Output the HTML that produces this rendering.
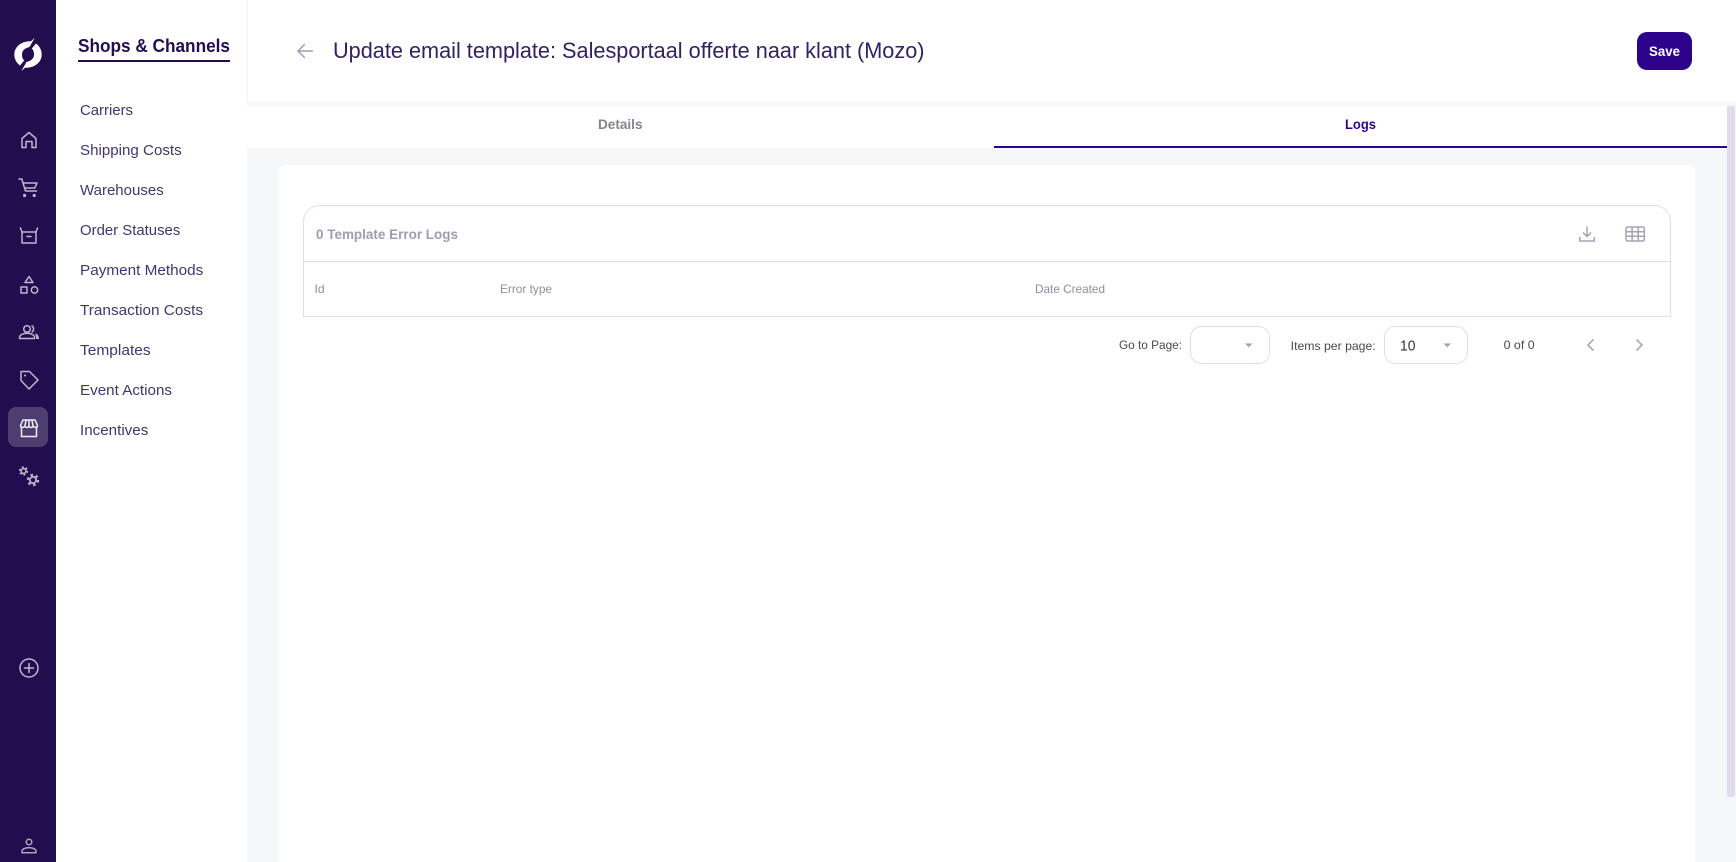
<!DOCTYPE html>
<html lang="en"><head><meta charset="utf-8"><title>Update email template</title>
<style>
html,body{margin:0;padding:0;width:1736px;height:862px;overflow:hidden;background:#f6f7f9}
svg{display:block;font-family:"Liberation Sans",sans-serif}
.m{font-size:15px;fill:#43366c}
.ic{fill:none;stroke:#bdb7ce;stroke-width:1.5;stroke-linejoin:round;stroke-linecap:round}
</style></head><body>
<svg width="1736" height="862" viewBox="0 0 1736 862" xmlns="http://www.w3.org/2000/svg">
<rect width="1736" height="862" fill="#f6f7f9"/>
<rect x="247" y="0" width="1489" height="102" fill="#fff"/>
<rect x="247" y="106" width="1481" height="42" fill="#fff"/>
<rect x="994" y="146" width="734" height="2" fill="#2e038c"/>
<rect x="1727" y="106" width="8" height="691" rx="2" fill="#e0dcee"/>
<rect x="279" y="165" width="1416" height="720" rx="6" fill="#fff"/>
<rect x="56" y="0" width="191" height="862" fill="#fff"/>
<rect x="247" y="0" width="1" height="102" fill="#f4f4f7"/>
<rect x="0" y="0" width="56" height="862" fill="#220d4e"/>

<g fill="#fff">
<path d="M34.8 37.7L31 41.2C21 41 14.3 47 14.3 54.5C14.3 59 16.5 63 20 65.5L24.2 60.5C22.7 59.3 22 57 22 54.5C22 50.5 25 48 29.5 47Z"/>
<path transform="rotate(180 28 54.5)" d="M34.8 37.7L31 41.2C21 41 14.3 47 14.3 54.5C14.3 59 16.5 63 20 65.5L24.2 60.5C22.7 59.3 22 57 22 54.5C22 50.5 25 48 29.5 47Z"/>
</g>

<g class="ic">
<path d="M22 147.5V138.5L29 132.5L36 138.5V147.5H32V141.5H26V147.5Z"/>
<path d="M19 179h2.8L25.5 191H36.5M23 183H37L34.8 188H24.6"/>
<path d="M20.5 228L22 232V243H36V232L37.5 228M22 232H36M27 236.5H31"/>
<path d="M29 276.5L33 282.5H25Z"/>
<rect x="21" y="287" width="6" height="6"/>
<circle cx="34.5" cy="290" r="3.2"/>
<circle cx="27" cy="329" r="3.3"/>
<path d="M19.5 338.5V337.5C19.5 334.8 23.5 333.3 27 333.3S34.5 334.8 34.5 337.5V338.5Z"/>
<path d="M32 325.8A4 4 0 0 1 32 332.2"/>
<path d="M21 371.5H29.5L38 380L29 389L21 380.5Z"/>
<path d="M21.5 427V436.5H36.5V427" style="stroke:#eeecf3"/>
<path d="M23 420H35L37.5 425.5C37.5 428 34.5 428 33.2 426C32 428 30 428 29 426C28 428 26 428 24.8 426C23.5 428 20.5 428 20.5 425.5ZM26 420.5L25 425.5M29 420.5V425.5M32 420.5L33 425.5" style="stroke:#eeecf3"/>
<circle cx="23.5" cy="471" r="2.4"/>
<circle cx="23.5" cy="471" r="3.8" style="stroke-width:1.6;stroke-dasharray:2 2;stroke-linecap:butt"/>
<circle cx="33" cy="480" r="3.2" style="stroke-width:1.8"/>
<circle cx="33" cy="480" r="5.2" style="stroke-width:2;stroke-dasharray:2.6 2.85;stroke-linecap:butt"/>
<circle cx="29" cy="668" r="9"/>
<path d="M24.5 668H33.5M29 663.5V672.5"/>
<g style="stroke:#aaa4bf">
<circle cx="29" cy="842" r="2.8"/>
<path d="M22 852.8V851.3C22 849 25.5 847.6 29 847.6S36 849 36 851.3V852.8Z"/>
</g>
</g>
<path d="M35 333.4C37.4 334 39 335.5 39 339H36C36 336.8 35.8 335 35 333.4Z" fill="#bdb7ce"/>
<circle cx="25" cy="375.5" r="1" fill="#bdb7ce"/>
<circle cx="24.6" cy="195.5" r="1.6" fill="#bdb7ce"/>
<circle cx="34.2" cy="195.5" r="1.6" fill="#bdb7ce"/>
<rect x="8" y="407" width="40" height="40" rx="8" fill="#ffffff" fill-opacity=".2"/>

<text x="78" y="52" font-size="18" font-weight="700" fill="#220d4e" textLength="152" lengthAdjust="spacingAndGlyphs">Shops &amp; Channels</text>
<rect x="78" y="60" width="152" height="2" fill="#220d4e"/>
<text class="m" x="80" y="115" textLength="53" lengthAdjust="spacingAndGlyphs">Carriers</text>
<text class="m" x="80" y="155" textLength="101.7" lengthAdjust="spacingAndGlyphs">Shipping Costs</text>
<text class="m" x="80" y="195" textLength="83.7" lengthAdjust="spacingAndGlyphs">Warehouses</text>
<text class="m" x="80" y="235" textLength="100.3" lengthAdjust="spacingAndGlyphs">Order Statuses</text>
<text class="m" x="80" y="275" textLength="123.3" lengthAdjust="spacingAndGlyphs">Payment Methods</text>
<text class="m" x="80" y="315" textLength="123" lengthAdjust="spacingAndGlyphs">Transaction Costs</text>
<text class="m" x="80" y="355" textLength="70.7" lengthAdjust="spacingAndGlyphs">Templates</text>
<text class="m" x="80" y="395" textLength="92" lengthAdjust="spacingAndGlyphs">Event Actions</text>
<text class="m" x="80" y="435" textLength="68.3" lengthAdjust="spacingAndGlyphs">Incentives</text>

<path d="M312.5 51H298M304.5 44.5L298 51L304.5 57.5" fill="none" stroke="#a09ab4" stroke-width="1.4" stroke-linejoin="round" stroke-linecap="round"/>
<text x="333" y="58" font-size="22" fill="#33225f" textLength="591.5" lengthAdjust="spacingAndGlyphs">Update email template: Salesportaal offerte naar klant (Mozo)</text>

<rect x="1637" y="32" width="55" height="38" rx="10" fill="#2e038c"/>
<text x="1649" y="56" font-size="14" font-weight="700" fill="#fff" textLength="31" lengthAdjust="spacingAndGlyphs">Save</text>

<text x="598" y="129" font-size="14" font-weight="700" fill="#85848c" textLength="44.5" lengthAdjust="spacingAndGlyphs">Details</text>
<text x="1345" y="129" font-size="14" font-weight="700" fill="#2e038c" textLength="31" lengthAdjust="spacingAndGlyphs">Logs</text>

<path d="M319.5 205.5H1654.5A16 16 0 0 1 1670.5 221.5V316.5H303.5V221.5A16 16 0 0 1 319.5 205.5Z" fill="#fff" stroke="#e0deec" stroke-width="1"/>
<rect x="304" y="261" width="1366" height="1" fill="#e0deec"/>
<text x="316" y="239" font-size="14" font-weight="700" fill="#a09cb0" textLength="142" lengthAdjust="spacingAndGlyphs">0 Template Error Logs</text>
<g font-size="12" fill="#908ca2">
<text x="314.5" y="293" textLength="10" lengthAdjust="spacingAndGlyphs">Id</text>
<text x="500" y="293" textLength="52" lengthAdjust="spacingAndGlyphs">Error type</text>
<text x="1035" y="293" textLength="70" lengthAdjust="spacingAndGlyphs">Date Created</text>
</g>

<g fill="none" stroke="#a6a2b6" stroke-width="1.5">
<path d="M1587 226.5V236M1583 232.5L1587 236.5L1591 232.5M1579.8 237V241H1594.2V237"/>
<rect x="1626" y="227" width="18.3" height="14" rx="1.5"/>
<path d="M1632.1 227V241M1638.2 227V241M1626 231.7H1644.3M1626 236.3H1644.3"/>
</g>

<g font-size="12" fill="#4a4a4a">
<text x="1119" y="349" textLength="63" lengthAdjust="spacingAndGlyphs">Go to Page:</text>
<text x="1290.7" y="350" textLength="85" lengthAdjust="spacingAndGlyphs">Items per page:</text>
<text x="1503.6" y="349" textLength="31" lengthAdjust="spacingAndGlyphs">0 of 0</text>
</g>
<rect x="1190.5" y="326.5" width="79" height="37" rx="11" fill="#fff" stroke="#e0deec"/>
<rect x="1384.5" y="326.5" width="83" height="37" rx="11" fill="#fff" stroke="#e0deec"/>
<path d="M1245 343.5H1252.5L1248.75 347.3Z" fill="#a3a3a8"/>
<path d="M1443.5 343.5H1451L1447.25 347.3Z" fill="#a3a3a8"/>
<text x="1400" y="350.5" font-size="15" fill="#33333a" textLength="15.5" lengthAdjust="spacingAndGlyphs">10</text>
<path d="M1593.5 339.5L1588 345L1593.5 350.5M1636.5 339.5L1642 345L1636.5 350.5" fill="none" stroke="#a9a9ae" stroke-width="1.6"/>
</svg>
</body></html>
